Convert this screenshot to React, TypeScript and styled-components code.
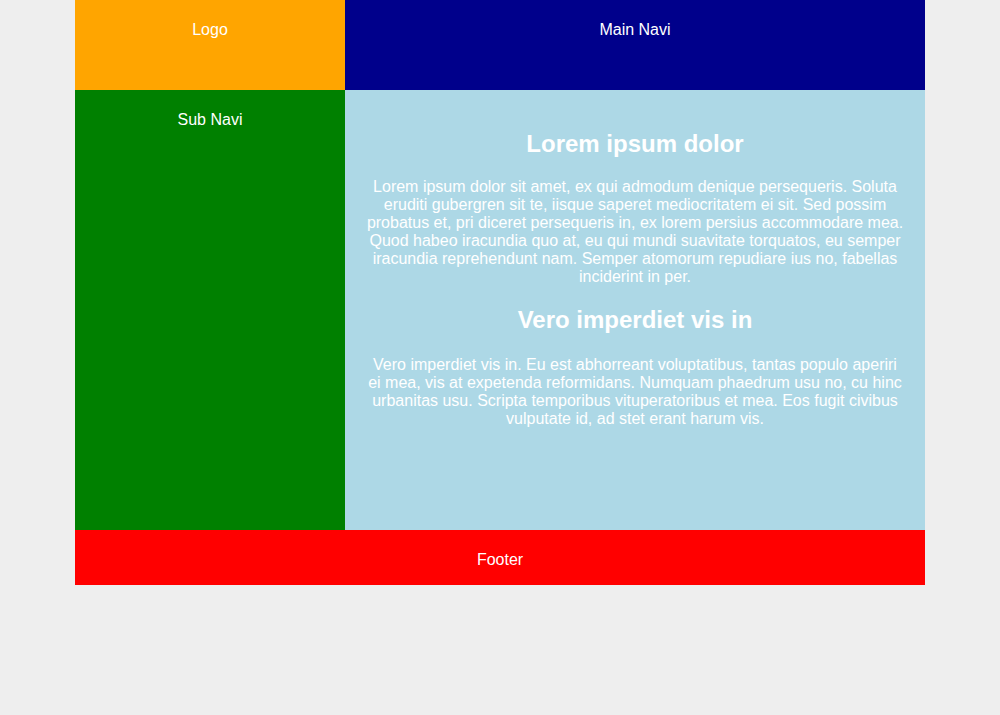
import React from "react";
import styled, { createGlobalStyle } from "styled-components";

const GlobalStyle = createGlobalStyle`
  html, body {
    margin: 0;
    padding: 0;
    background: #eeeeee;
    font-family: "Liberation Sans", Arial, sans-serif;
    font-size: 16px;
  }
`;

const Page = styled.div`
  width: 850px;
  margin: 0 auto;
  display: grid;
  grid-template-columns: 270px 1fr;
  grid-template-rows: 90px 440px 55px;
  color: #ffffff;
  text-align: center;
`;

const Block = styled.div<{ $bg: string; $span?: boolean }>`
  background: ${(p) => p.$bg};
  grid-column: ${(p) => (p.$span ? "1 / span 2" : "auto")};
  padding: 21px 20px 20px;
  box-sizing: border-box;
`;

const Content = styled.main`
  background: #add8e6;
  padding: 20px;
  box-sizing: border-box;
`;

const Heading = styled.h2`
  font-size: 24px;
  font-weight: bold;
  margin: 20px 0;
`;

const Text = styled.p`
  margin: 20px 0;
  line-height: 18px;

  h2 + & + h2 + & {
    margin-top: 22px;
  }
`;

export default function App() {
  return (
    <>
      <GlobalStyle />
      <Page>
        <Block $bg="orange">Logo</Block>
        <Block $bg="#00008b">Main Navi</Block>
        <Block $bg="green">Sub Navi</Block>
        <Content>
          <Heading>Lorem ipsum dolor</Heading>
          <Text>
            Lorem ipsum dolor sit amet, ex qui admodum denique persequeris. Soluta eruditi gubergren sit te,
            iisque saperet mediocritatem ei sit. Sed possim probatus et, pri diceret persequeris in, ex lorem
            persius accommodare mea. Quod habeo iracundia quo at, eu qui mundi suavitate torquatos, eu semper
            iracundia reprehendunt nam. Semper atomorum repudiare ius no, fabellas inciderint in per.
          </Text>
          <Heading>Vero imperdiet vis in</Heading>
          <Text>
            Vero imperdiet vis in. Eu est abhorreant voluptatibus, tantas populo aperiri ei mea, vis at expetenda
            reformidans. Numquam phaedrum usu no, cu hinc urbanitas usu. Scripta temporibus vituperatoribus et
            mea. Eos fugit civibus vulputate id, ad stet erant harum vis.
          </Text>
        </Content>
        <Block $bg="red" $span>Footer</Block>
      </Page>
    </>
  );
}
